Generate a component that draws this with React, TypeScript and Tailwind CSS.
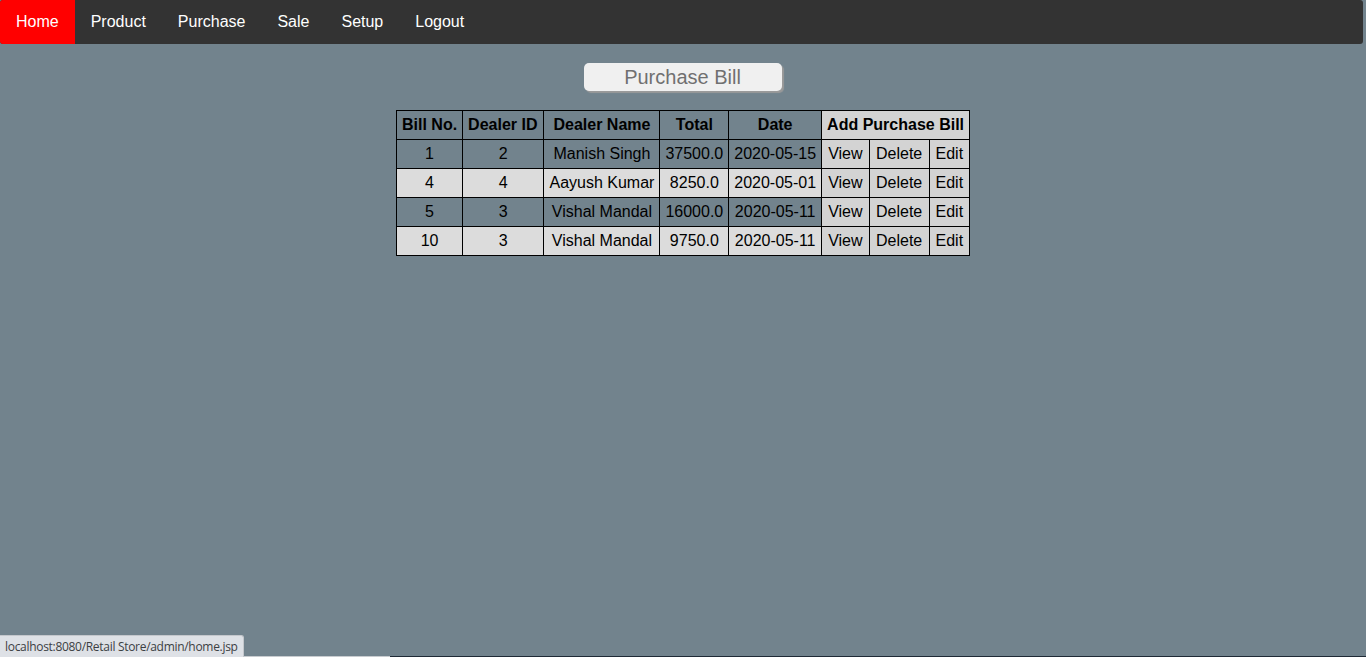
import React from "react";

const rows = [
  { id: "1", dealer: "2", name: "Manish Singh", total: "37500.0", date: "2020-05-15" },
  { id: "4", dealer: "4", name: "Aayush Kumar", total: "8250.0", date: "2020-05-01" },
  { id: "5", dealer: "3", name: "Vishal Mandal", total: "16000.0", date: "2020-05-11" },
  { id: "10", dealer: "3", name: "Vishal Mandal", total: "9750.0", date: "2020-05-11" },
];

const navItems = ["Home", "Product", "Purchase", "Sale", "Setup", "Logout"];

export default function App() {
  return (
    <div
      className="relative w-[1366px] h-[657px] overflow-hidden bg-[#72838d] text-black"
      style={{ fontFamily: '"Liberation Sans", Arial, sans-serif' }}
    >
      <nav className="flex h-[44px] w-[1363px] bg-[#333333] rounded-[3px] overflow-hidden">
        {navItems.map((item, i) => (
          <a
            key={item}
            href="#"
            className={`flex items-center px-4 text-[16px] text-white ${i === 0 ? "bg-[#ff0000]" : ""}`}
          >
            {item}
          </a>
        ))}
      </nav>

      <div className="flex justify-center pt-[19px] pr-[1px]">
        <button className="w-[198px] h-[28px] rounded-[5px] bg-[#f0f0f0] text-[20px] leading-none text-[#707070] shadow-[2px_2px_1px_#9a9a9a]">
          Purchase Bill
        </button>
      </div>

      <div className="flex justify-center pt-[19px]">
        <table className="border-collapse text-[16px] leading-[18px] text-center">
          <thead>
            <tr>
              <th className="border border-black px-[5px] py-[5px] font-bold">Bill No.</th>
              <th className="border border-black pl-[5px] pr-[6px] py-[5px] font-bold">Dealer ID</th>
              <th className="border border-black px-[5px] py-[5px] font-bold">Dealer Name</th>
              <th className="border border-black px-[5px] py-[5px] font-bold">Total</th>
              <th className="border border-black px-[5px] py-[5px] font-bold">Date</th>
              <th colSpan={3} className="border border-black px-[5px] py-[5px] font-bold bg-[#d3d3d3]">
                Add Purchase Bill
              </th>
            </tr>
          </thead>
          <tbody>
            {rows.map((r, i) => {
              const bg = i % 2 === 1 ? "bg-[#dcdcdc]" : "";
              return (
                <tr key={r.id}>
                  <td className={`border border-black px-[5px] py-[5px] ${bg}`}>{r.id}</td>
                  <td className={`border border-black px-[5px] py-[5px] ${bg}`}>{r.dealer}</td>
                  <td className={`border border-black px-[5px] py-[5px] ${bg}`}>{r.name}</td>
                  <td className={`border border-black px-[5px] py-[5px] ${bg}`}>{r.total}</td>
                  <td className={`border border-black px-[5px] py-[5px] ${bg}`}>{r.date}</td>
                  <td className="border border-black px-[5px] py-[5px] bg-[#d3d3d3]">View</td>
                  <td className="border border-black px-[5px] py-[5px] bg-[#d3d3d3]">Delete</td>
                  <td className="border border-black px-[5px] py-[5px] bg-[#d3d3d3]">Edit</td>
                </tr>
              );
            })}
          </tbody>
        </table>
      </div>

      <div className="absolute left-0 bottom-0 w-full h-[1px] flex">
        <div className="w-[48px] bg-[#1f2a36]" />
        <div className="w-[342px] bg-[#c8ccd0]" />
        <div className="flex-1 bg-[#1f2a36]" />
      </div>

      <div
        className="absolute left-0 bottom-0 h-[22px] px-[5px] flex items-center bg-[#dee1e6] border-t border-r border-[#c4c7cc] rounded-tr-[3px] text-[12px] text-[#3c4043]"
        style={{ fontFamily: '"Open Sans", "Noto Sans", sans-serif', letterSpacing: "-0.3px" }}
      >
        localhost:8080/Retail Store/admin/home.jsp
      </div>
    </div>
  );
}
